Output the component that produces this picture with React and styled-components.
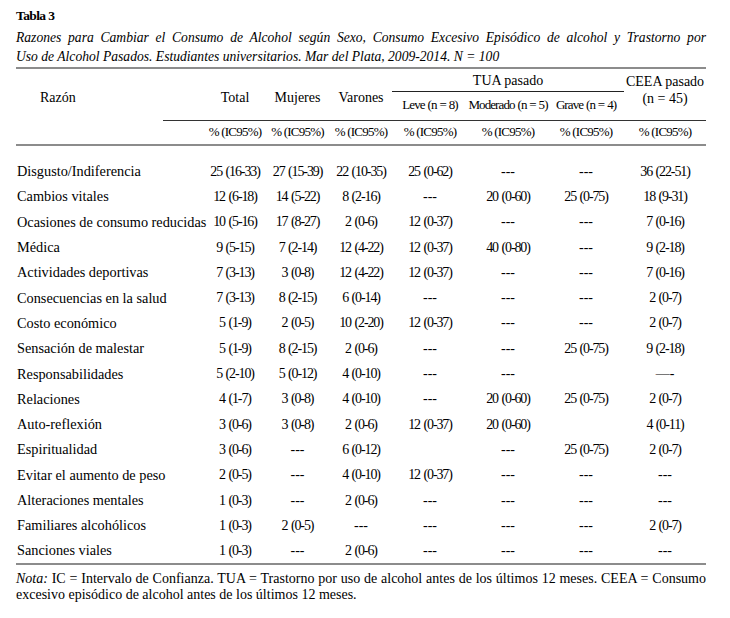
import React from 'react';
import styled, {createGlobalStyle} from 'styled-components';

const GlobalStyle = createGlobalStyle`
  body {
    margin: 0;
    background: #fff;
    color: #000;
    font-family: "Liberation Serif", "Times New Roman", serif;
  }
`;

const Page = styled.div`
  width: 690px;
  padding: 8px 0 0 16px;
`;

const Title = styled.div`
  font-weight: bold;
  font-size: 13.5px;
  letter-spacing: -0.6px;
  line-height: 16px;
`;

const Caption = styled.div`
  font-style: italic;
  font-size: 13.6px;
  line-height: 19px;
  margin-top: 4px;
`;

const JustLine = styled.span`
  display: block;
  text-align: justify;
  text-align-last: ${(p) => (p.$fill ? 'justify' : 'left')};
  white-space: nowrap;
`;

const Table = styled.table`
  width: 690px;
  table-layout: fixed;
  border-collapse: collapse;
  margin-top: 1px;
  border-top: 2px solid #8c8c8c;
  border-bottom: 2px solid #8c8c8c;
`;

const HeadCell = styled.th`
  font-weight: normal;
  font-size: 14px;
  padding: 0;
  text-align: ${(p) => (p.$left ? 'left' : 'center')};
  padding-left: ${(p) => (p.$left ? '24px' : '0')};
  vertical-align: ${(p) => (p.$top ? 'top' : 'middle')};
  padding-top: ${(p) => (p.$top ? '4px' : p.$low ? '6px' : '0')};
  line-height: 17px;
  white-space: nowrap;
`;

const GroupCell = styled(HeadCell)`
  height: 22px;
  border-bottom: 1px solid #222;
`;

const SubHead = styled.th`
  font-weight: normal;
  font-size: 13px;
  letter-spacing: -0.9px;
  word-spacing: 0.5px;
  padding: 0 0 2px;
  height: 26px;
  text-align: center;
  white-space: nowrap;
`;

const UnitRow = styled.tr`
  border-bottom: 2px solid #8c8c8c;
`;

const UnitCell = styled.th`
  font-weight: normal;
  font-size: 13px;
  letter-spacing: -0.8px;
  text-align: center;
  padding: 0 0 1px;
  height: 22px;
  border-top: ${(p) => (p.$ruled ? '1px solid #333' : 'none')};
  white-space: nowrap;
`;

const Spacer = styled.tr`
  height: 14px;
`;

const Row = styled.tr`
  height: 25.3px;
`;

const Label = styled.td`
  padding: 0 0 0 1px;
  font-size: 14.3px;
  white-space: nowrap;
  overflow: visible;
`;

const Value = styled.td`
  padding: 0;
  text-align: center;
  font-size: 14px;
  letter-spacing: ${(p) => (p.$dash ? '0' : '-1.1px')};
  word-spacing: 1px;
  white-space: nowrap;
`;

const Note = styled.div`
  font-size: 14px;
  line-height: 16px;
  margin-top: 6px;
  width: 690px;

  em {
    font-style: italic;
  }
`;

const widths = [147, 42, 60, 65, 62, 76, 80, 76, 82];

const rows = [
  ['Disgusto/Indiferencia', '25 (16-33)', '27 (15-39)', '22 (10-35)', '25 (0-62)', '---', '---', '36 (22-51)'],
  ['Cambios vitales', '12 (6-18)', '14 (5-22)', '8 (2-16)', '---', '20 (0-60)', '25 (0-75)', '18 (9-31)'],
  ['Ocasiones de consumo reducidas', '10 (5-16)', '17 (8-27)', '2 (0-6)', '12 (0-37)', '---', '---', '7 (0-16)'],
  ['Médica', '9 (5-15)', '7 (2-14)', '12 (4-22)', '12 (0-37)', '40 (0-80)', '---', '9 (2-18)'],
  ['Actividades deportivas', '7 (3-13)', '3 (0-8)', '12 (4-22)', '12 (0-37)', '---', '---', '7 (0-16)'],
  ['Consecuencias en la salud', '7 (3-13)', '8 (2-15)', '6 (0-14)', '---', '---', '---', '2 (0-7)'],
  ['Costo económico', '5 (1-9)', '2 (0-5)', '10 (2-20)', '12 (0-37)', '---', '---', '2 (0-7)'],
  ['Sensación de malestar', '5 (1-9)', '8 (2-15)', '2 (0-6)', '---', '---', '25 (0-75)', '9 (2-18)'],
  ['Responsabilidades', '5 (2-10)', '5 (0-12)', '4 (0-10)', '---', '---', '', '\u2014-'],
  ['Relaciones', '4 (1-7)', '3 (0-8)', '4 (0-10)', '---', '20 (0-60)', '25 (0-75)', '2 (0-7)'],
  ['Auto-reflexión', '3 (0-6)', '3 (0-8)', '2 (0-6)', '12 (0-37)', '20 (0-60)', '', '4 (0-11)'],
  ['Espiritualidad', '3 (0-6)', '---', '6 (0-12)', '', '---', '25 (0-75)', '2 (0-7)'],
  ['Evitar el aumento de peso', '2 (0-5)', '---', '4 (0-10)', '12 (0-37)', '---', '---', '---'],
  ['Alteraciones mentales', '1 (0-3)', '---', '2 (0-6)', '---', '---', '---', '---'],
  ['Familiares alcohólicos', '1 (0-3)', '2 (0-5)', '---', '---', '---', '---', '2 (0-7)'],
  ['Sanciones viales', '1 (0-3)', '---', '2 (0-6)', '---', '---', '---', '---'],
];

export default function App() {
  return (
    <Page>
      <GlobalStyle />
      <Title>Tabla 3</Title>
      <Caption>
        <JustLine $fill>
          Razones para Cambiar el Consumo de Alcohol según Sexo, Consumo Excesivo Episódico de alcohol y Trastorno por
        </JustLine>
        <JustLine>
          Uso de Alcohol Pasados. Estudiantes universitarios. Mar del Plata, 2009-2014. N = 100
        </JustLine>
      </Caption>
      <Table>
        <colgroup>
          {widths.map((w, i) => (
            <col key={i} style={{width: w}} />
          ))}
        </colgroup>
        <thead>
          <tr>
            <HeadCell $left $low colSpan={2} rowSpan={2}>Razón</HeadCell>
            <HeadCell $low rowSpan={2}>Total</HeadCell>
            <HeadCell $low rowSpan={2}>Mujeres</HeadCell>
            <HeadCell $low rowSpan={2}>Varones</HeadCell>
            <GroupCell colSpan={3}>TUA pasado</GroupCell>
            <HeadCell $top rowSpan={2}>
              CEEA pasado
              <br />
              (n = 45)
            </HeadCell>
          </tr>
          <tr>
            <SubHead>Leve (n = 8)</SubHead>
            <SubHead>Moderado (n = 5)</SubHead>
            <SubHead>Grave (n = 4)</SubHead>
          </tr>
          <UnitRow>
            <UnitCell />
            <UnitCell $ruled />
            {widths.slice(2).map((w, i) => (
              <UnitCell key={i} $ruled>% (IC95%)</UnitCell>
            ))}
          </UnitRow>
        </thead>
        <tbody>
          <Spacer>
            <td colSpan={9} />
          </Spacer>
          {rows.map(([label, ...vals]) => (
            <Row key={label}>
              <Label colSpan={2}>{label}</Label>
              {vals.map((v, i) => (
                <Value key={i} $dash={!/\d/.test(v)}>{v}</Value>
              ))}
            </Row>
          ))}
        </tbody>
      </Table>
      <Note>
        <JustLine $fill>
          <em>Nota:</em> IC = Intervalo de Confianza. TUA = Trastorno por uso de alcohol antes de los últimos 12 meses. CEEA = Consumo
        </JustLine>
        <JustLine>excesivo episódico de alcohol antes de los últimos 12 meses.</JustLine>
      </Note>
    </Page>
  );
}
